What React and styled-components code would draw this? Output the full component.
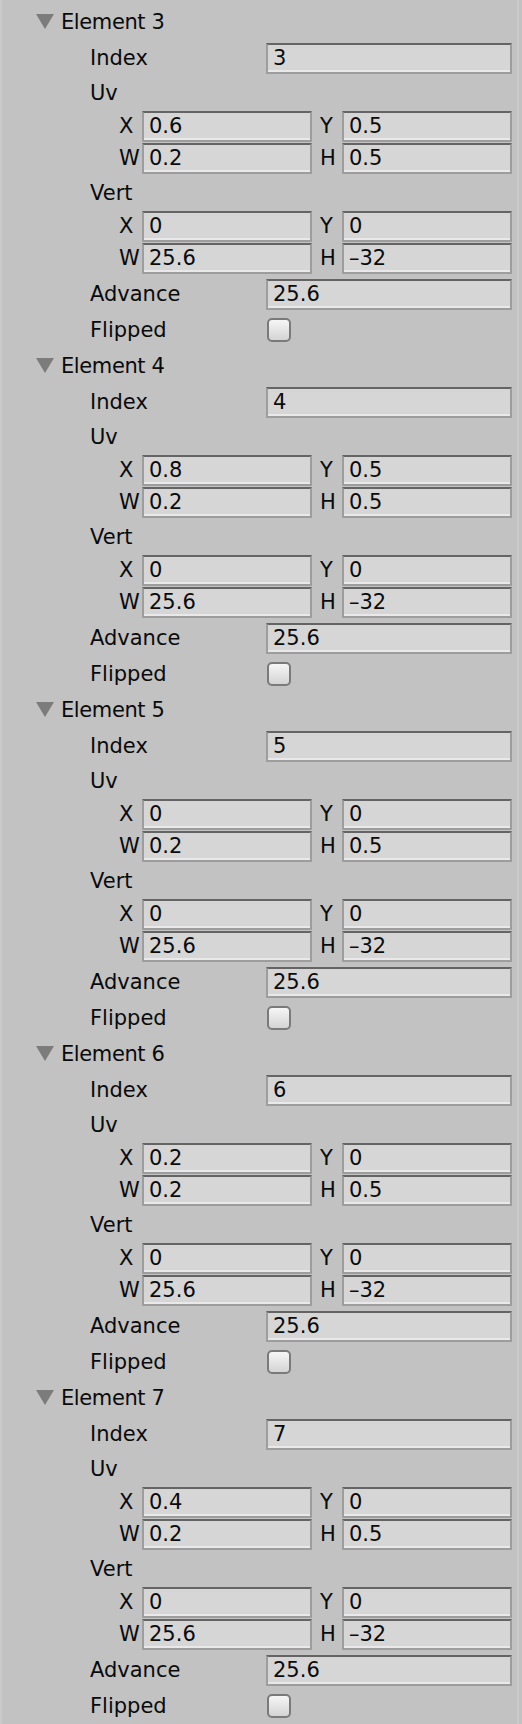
import styled, { createGlobalStyle } from 'styled-components';

const GlobalStyle = createGlobalStyle`
  html, body {
    margin: 0;
    padding: 0;
    background: #c2c2c2;
  }
  body {
    font-family: "DejaVu Sans", "Liberation Sans", sans-serif;
    font-size: 21px;
    color: #0a0a0a;
  }
`;

const Panel = styled.div`
  box-sizing: border-box;
  width: 519px;
  min-height: 1724px;
  padding-top: 4px;
  border-left: 2px solid #cacaca;
  border-right: 2px solid #cacaca;
`;

const Header = styled.div`
  display: flex;
  align-items: center;
  height: 36px;
  padding-left: 34px;
`;

const Arrow = styled.svg`
  width: 18px;
  height: 15px;
  margin-right: 7px;
  margin-top: -1px;
  flex: none;
`;

const Row = styled.div`
  display: grid;
  grid-template-columns: 176px 246px;
  align-items: center;
  height: 36px;
  padding-left: 88px;
`;

const Label = styled.span`
  white-space: nowrap;
  line-height: 1;
`;

const Title = styled(Label)`
  letter-spacing: -0.4px;
`;

const Group = styled.div`
  margin-bottom: 1px;
`;

const GroupLabel = styled.div`
  display: flex;
  align-items: center;
  height: 35px;
  padding-left: 88px;
  line-height: 1;
`;

const SubRow = styled.div`
  display: grid;
  grid-template-columns: 26px 170px 30px 170px;
  align-items: start;
  height: 32px;
  padding-left: 114px;
`;

const SubLabel = styled.span`
  display: flex;
  align-items: center;
  height: 31px;
  padding-left: ${(p) => (p.$first ? '3px' : '8px')};
  line-height: 1;
`;

const Field = styled.div`
  box-sizing: border-box;
  display: flex;
  align-items: center;
  height: 31px;
  padding: 0 5px;
  background: #d6d6d6;
  border: 2px solid #9d9d9d;
  border-top-color: #646464;
  box-shadow: inset 0 -2px 0 #e9e9e9;
  line-height: 1;
  white-space: nowrap;
`;

const Checkbox = styled.div`
  box-sizing: border-box;
  width: 24px;
  height: 24px;
  margin-left: 1px;
  border: 2px solid #7a7a7a;
  border-radius: 5px;
  background: linear-gradient(#f6f6f6, #d4d4d4);
`;

const elements = [
  { n: 3, uv: ['0.6', '0.5', '0.2', '0.5'] },
  { n: 4, uv: ['0.8', '0.5', '0.2', '0.5'] },
  { n: 5, uv: ['0', '0', '0.2', '0.5'] },
  { n: 6, uv: ['0.2', '0', '0.2', '0.5'] },
  { n: 7, uv: ['0.4', '0', '0.2', '0.5'] },
];

const vert = ['0', '0', '25.6', '–32'];

const RectGroup = ({ name, values }) => (
  <Group>
    <GroupLabel>{name}</GroupLabel>
    <SubRow>
      <SubLabel $first>X</SubLabel>
      <Field>{values[0]}</Field>
      <SubLabel>Y</SubLabel>
      <Field>{values[1]}</Field>
    </SubRow>
    <SubRow>
      <SubLabel $first>W</SubLabel>
      <Field>{values[2]}</Field>
      <SubLabel>H</SubLabel>
      <Field>{values[3]}</Field>
    </SubRow>
  </Group>
);

const ElementBlock = ({ n, uv }) => (
  <section>
    <Header>
      <Arrow viewBox="0 0 18 15">
        <polygon points="0,0 18,0 9,15" fill="#7c7c7c" />
      </Arrow>
      <Title>Element {n}</Title>
    </Header>
    <Row>
      <Label>Index</Label>
      <Field>{n}</Field>
    </Row>
    <RectGroup name="Uv" values={uv} />
    <RectGroup name="Vert" values={vert} />
    <Row>
      <Label>Advance</Label>
      <Field>25.6</Field>
    </Row>
    <Row>
      <Label>Flipped</Label>
      <Checkbox />
    </Row>
  </section>
);

export default function App() {
  return (
    <>
      <GlobalStyle />
      <Panel>
        {elements.map((el) => (
          <ElementBlock key={el.n} {...el} />
        ))}
      </Panel>
    </>
  );
}
